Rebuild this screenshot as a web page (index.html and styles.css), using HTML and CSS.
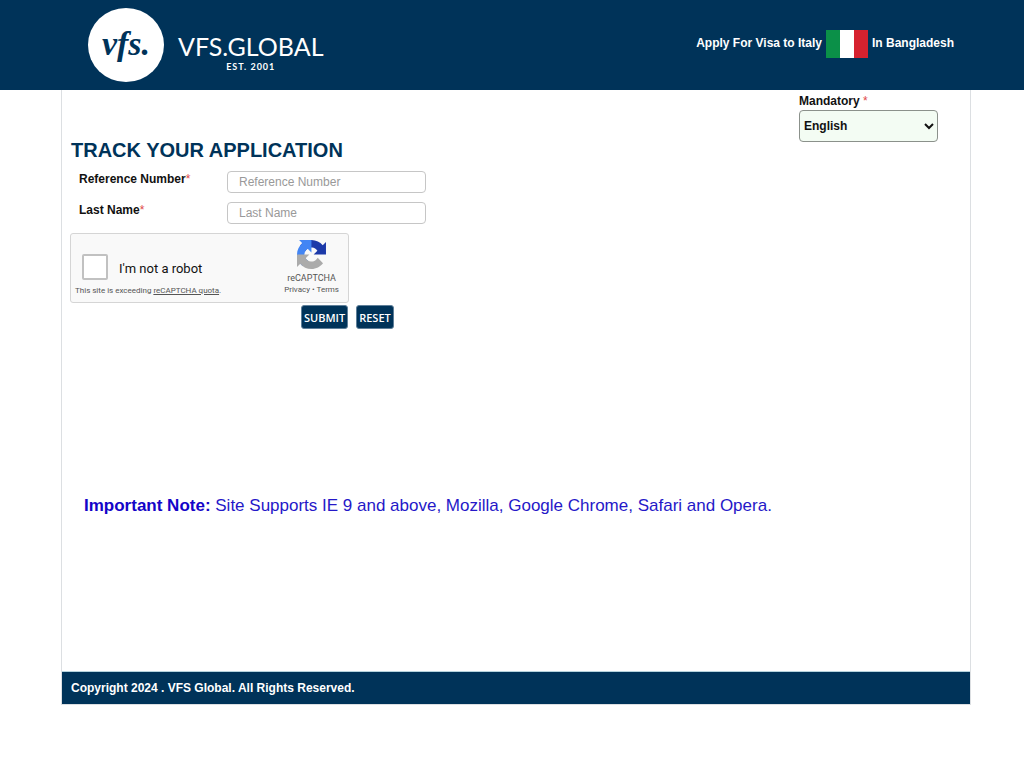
FILE: index.html
```html
<!DOCTYPE html>
<html lang="en">
<head>
<meta charset="utf-8">
<meta name="viewport" content="width=device-width, initial-scale=1">
<title>VFS Global - Track Your Application</title>
<link rel="stylesheet" href="styles.css">
</head>
<body>
<header class="site-header">
  <a class="brand" href="#" aria-label="VFS Global home">
    <span class="brand-mark">vfs.</span>
    <span class="brand-text">
      <span class="brand-name">VFS.GLOBAL</span>
      <span class="brand-est">EST. 2001</span>
    </span>
  </a>
  <p class="route">
    <span>Apply For Visa to Italy</span>
    <svg class="flag" viewBox="0 0 42 28" role="img" aria-label="Flag of Italy">
      <path fill="#0b9048" d="M0 0h14v28H0z"/><path fill="#fff" d="M14 0h14v28H14z"/><path fill="#d6222f" d="M28 0h14v28H28z"/>
    </svg>
    <span>In Bangladesh</span>
  </p>
</header>
<div class="page">
  <main class="content">
    <div class="language">
      <label for="language">Mandatory <span class="required">*</span></label>
      <select id="language"><option>English</option></select>
    </div>
    <h1 class="title">TRACK YOUR APPLICATION</h1>
    <form class="track-form">
      <div class="field">
        <label for="reference">Reference Number<span class="required">*</span></label>
        <input id="reference" type="text" placeholder="Reference Number">
      </div>
      <div class="field">
        <label for="lastname">Last Name<span class="required">*</span></label>
        <input id="lastname" type="text" placeholder="Last Name">
      </div>
      <div class="captcha">
        <div class="captcha-main">
          <div class="captcha-check">
            <input id="robot" type="checkbox">
            <label for="robot">I'm not a robot</label>
          </div>
          <p class="captcha-quota">This site is exceeding <a href="#">reCAPTCHA quota</a>.</p>
        </div>
        <div class="captcha-side">
          <svg class="captcha-logo" viewBox="0 0 64 64" aria-hidden="true">
            <path fill="#1c3aa9" d="M64 31.955l-.035-1.375V4.687l-7.16 7.16C50.945 4.674 42.033.093 32.05.093c-10.4 0-19.622 4.96-25.458 12.64l11.736 11.86a15.55 15.55 0 0 1 4.754-5.334c2.05-1.6 4.952-2.906 8.968-2.906.485 0 .86.057 1.135.163 4.976.393 9.288 3.14 11.828 7.124l-8.307 8.307z"/>
            <path fill="#4285f4" d="M31.862.094l-1.375.035H4.594l7.16 7.16C4.58 13.147 0 22.06 0 32.046c0 10.4 4.96 19.622 12.64 25.458L24.5 45.768a15.55 15.55 0 0 1-5.334-4.754c-1.6-2.05-2.906-4.952-2.906-8.968 0-.485.057-.86.163-1.135.393-4.976 3.14-9.288 7.124-11.828l8.307 8.307z"/>
            <path fill="#ababab" d="M.001 32.045l.035 1.375v25.893l7.16-7.16c5.86 7.173 14.774 11.754 24.76 11.754 10.4 0 19.622-4.96 25.458-12.64l-11.736-11.86a15.55 15.55 0 0 1-4.754 5.334c-2.05 1.6-4.952 2.906-8.968 2.906-.485 0-.86-.057-1.135-.163-4.976-.393-9.288-3.14-11.828-7.124l8.307-8.307z"/>
          </svg>
          <span class="captcha-name">reCAPTCHA</span>
          <span class="captcha-links"><a href="#">Privacy</a> • <a href="#">Terms</a></span>
        </div>
      </div>
      <div class="actions">
        <button type="submit">SUBMIT</button>
        <button type="reset">RESET</button>
      </div>
    </form>
    <p class="note"><strong>Important Note:</strong> Site Supports IE 9 and above, Mozilla, Google Chrome, Safari and Opera.</p>
  </main>
  <footer class="site-footer">Copyright 2024 . VFS Global. All Rights Reserved.</footer>
</div>
</body>
</html>
```

FILE: styles.css
```css
* { box-sizing: border-box; }

body {
  margin: 0;
  background: #fff;
  color: #111;
  font: 12px/16px "Liberation Sans", Arial, sans-serif;
}

h1, p { margin: 0; }

.site-header {
  display: flex;
  justify-content: space-between;
  align-items: flex-start;
  min-height: 90px;
  padding: 8px 70px 8px 88px;
  background: #003359;
  color: #fff;
}

.brand {
  display: flex;
  gap: 14px;
  color: #fff;
  text-decoration: none;
}

.brand-mark {
  width: 76px;
  height: 74px;
  border-radius: 50%;
  background: #fff;
  color: #003359;
  font: italic bold 34px/72px "Liberation Serif", "Times New Roman", serif;
  text-align: center;
}

.brand-text {
  display: flex;
  flex-direction: column;
  align-items: center;
  padding-top: 24px;
}

.brand-name { font: 25px/28px Lato, sans-serif; }

.brand-est {
  font: bold 9px/14px Lato, sans-serif;
  letter-spacing: 1px;
}

.route {
  display: flex;
  align-items: center;
  gap: 4px;
  padding-top: 22px;
  font-size: 12px;
  line-height: 26px;
  font-weight: bold;
}

.route span { padding-bottom: 2px; }

.flag {
  width: 42px;
  height: 28px;
}

.page {
  margin: 0 53px 0 61px;
  border: 1px solid #dcdfe2;
  border-top: 0;
}

.content {
  display: flex;
  flex-direction: column;
  min-height: 581px;
  padding: 3px 8px 0;
}

.language {
  display: flex;
  flex-direction: column;
  align-self: flex-end;
  width: 139px;
  margin-right: 24px;
  font-weight: bold;
}

.language select {
  height: 32px;
  margin-top: 1px;
  border: 1px solid #8b918b;
  border-radius: 4px;
  background: #f3fcf3;
  color: #111;
  font: bold 12px "Liberation Sans", Arial, sans-serif;
}

.required {
  color: #e04848;
  font-weight: normal;
}

.title {
  margin-top: -4px;
  padding-left: 1px;
  color: #003359;
  font-size: 20px;
  line-height: 24px;
}

.track-form { margin-top: 9px; }

.field {
  display: grid;
  grid-template-columns: 148px 199px;
  align-items: start;
  padding-left: 9px;
  margin-bottom: 9px;
}

.field label { font-weight: bold; }

.field input {
  height: 22px;
  padding: 0 11px;
  border: 1px solid #c6c6c6;
  border-radius: 4px;
  font: 12px "Liberation Sans", Arial, sans-serif;
}

.field input::placeholder { color: #999; }

.captcha {
  display: flex;
  justify-content: space-between;
  width: 279px;
  height: 70px;
  border: 1px solid #d5d5d5;
  border-radius: 3px;
  background: #f9f9f9;
  font-family: Roboto, sans-serif;
}

.captcha-main { padding: 20px 0 0 4px; }

.captcha-check {
  display: flex;
  align-items: center;
  gap: 11px;
  padding-left: 7px;
  font-size: 13px;
}

.captcha-check label { padding-top: 3px; }

.captcha-check input {
  appearance: none;
  width: 26px;
  height: 26px;
  margin: 0;
  border: 2px solid #c1c1c1;
  border-radius: 2px;
  background: #fff;
}

.captcha-quota {
  padding-top: 6px;
  color: #555;
  font-size: 8px;
  line-height: 10px;
}

.captcha a { color: inherit; }

.captcha-side {
  display: flex;
  flex-direction: column;
  align-items: center;
  padding: 6px 9px 0 0;
  color: #555;
}

.captcha-logo {
  width: 29px;
  height: 29px;
}

.captcha-name {
  padding-top: 3px;
  font-size: 9px;
  line-height: 12px;
}

.captcha-links {
  font-size: 8px;
  line-height: 12px;
}

.captcha-links a { text-decoration: none; }

.actions {
  display: flex;
  gap: 8px;
  padding: 2px 0 0 231px;
}

.actions button {
  height: 24px;
  padding: 0 2px;
  border: 1px solid #5f7f99;
  border-radius: 3px;
  background: #003359;
  color: #fff;
  font: 600 11px "Open Sans", sans-serif;
}

.note {
  margin-top: 166px;
  padding-left: 14px;
  color: #2518c8;
  font-size: 17px;
  line-height: 22px;
}

.note strong { color: #1404c8; }

.site-footer {
  padding: 8px 9px;
  border-top: 1px solid #b5d3dd;
  background: #003359;
  color: #fff;
  font-size: 12px;
  font-weight: bold;
}
```
